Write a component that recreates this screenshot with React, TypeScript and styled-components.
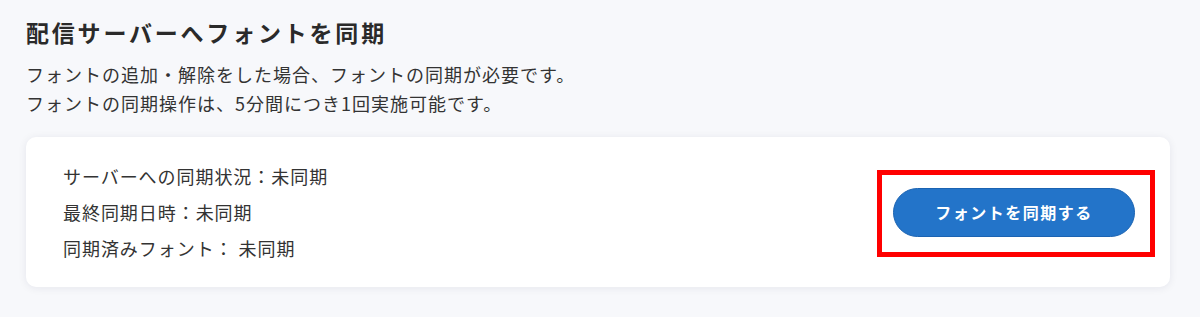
import React from "react";
import styled, { createGlobalStyle } from "styled-components";

const GlobalStyle = createGlobalStyle`
  html, body {
    margin: 0;
    padding: 0;
    background: #f7f8fb;
  }
  body {
    font-family: "Noto Sans CJK JP", "Noto Sans", sans-serif;
    color: #2e2e2e;
  }
`;

const Page = styled.div`
  padding: 16px 30px 30px 26px;
  display: flex;
  flex-direction: column;
`;

const Heading = styled.h2`
  margin: 0;
  font-size: 23px;
  line-height: 32px;
  font-weight: 700;
  letter-spacing: 2.8px;
  color: #2a2a2a;
`;

const Description = styled.div`
  margin-top: 12px;
  display: flex;
  flex-direction: column;
`;

const DescLine = styled.p`
  margin: 0;
  font-size: 18px;
  line-height: 29px;
  letter-spacing: 1px;
  color: #333;
`;

const Card = styled.section`
  margin-top: 19px;
  background: #ffffff;
  border-radius: 10px;
  box-shadow: 0 1px 8px rgba(20, 30, 60, 0.08);
  height: 150px;
  box-sizing: border-box;
  padding: 0 35px 0 37px;
  display: flex;
  align-items: center;
  justify-content: space-between;
`;

const StatusList = styled.div`
  display: flex;
  flex-direction: column;
`;

const StatusRow = styled.div`
  font-size: 18px;
  line-height: 36px;
  letter-spacing: 0.95px;
  color: #333;
`;

const ButtonWrap = styled.div`
  position: relative;
  display: flex;
`;

const Highlight = styled.div`
  position: absolute;
  top: -18px;
  bottom: -20px;
  left: -16px;
  right: -20px;
  border: 5px solid #ff0000;
  pointer-events: none;
`;

const SyncButton = styled.button`
  width: 242px;
  height: 49px;
  border-radius: 25px;
  border: 1px solid #1b63b2;
  background: #2374c9;
  color: #ffffff;
  font-family: "Noto Sans CJK JP", "Noto Sans", sans-serif;
  font-size: 16px;
  font-weight: 700;
  letter-spacing: 1.5px;
  cursor: pointer;
`;

export default function App() {
  return (
    <>
      <GlobalStyle />
      <Page>
        <Heading>配信サーバーへフォントを同期</Heading>
        <Description>
          <DescLine>フォントの追加・解除をした場合、フォントの同期が必要です。</DescLine>
          <DescLine>フォントの同期操作は、5分間につき1回実施可能です。</DescLine>
        </Description>
        <Card>
          <StatusList>
            <StatusRow>サーバーへの同期状況：未同期</StatusRow>
            <StatusRow>最終同期日時：未同期</StatusRow>
            <StatusRow>同期済みフォント： 未同期</StatusRow>
          </StatusList>
          <ButtonWrap>
            <SyncButton type="button">フォントを同期する</SyncButton>
            <Highlight />
          </ButtonWrap>
        </Card>
      </Page>
    </>
  );
}
